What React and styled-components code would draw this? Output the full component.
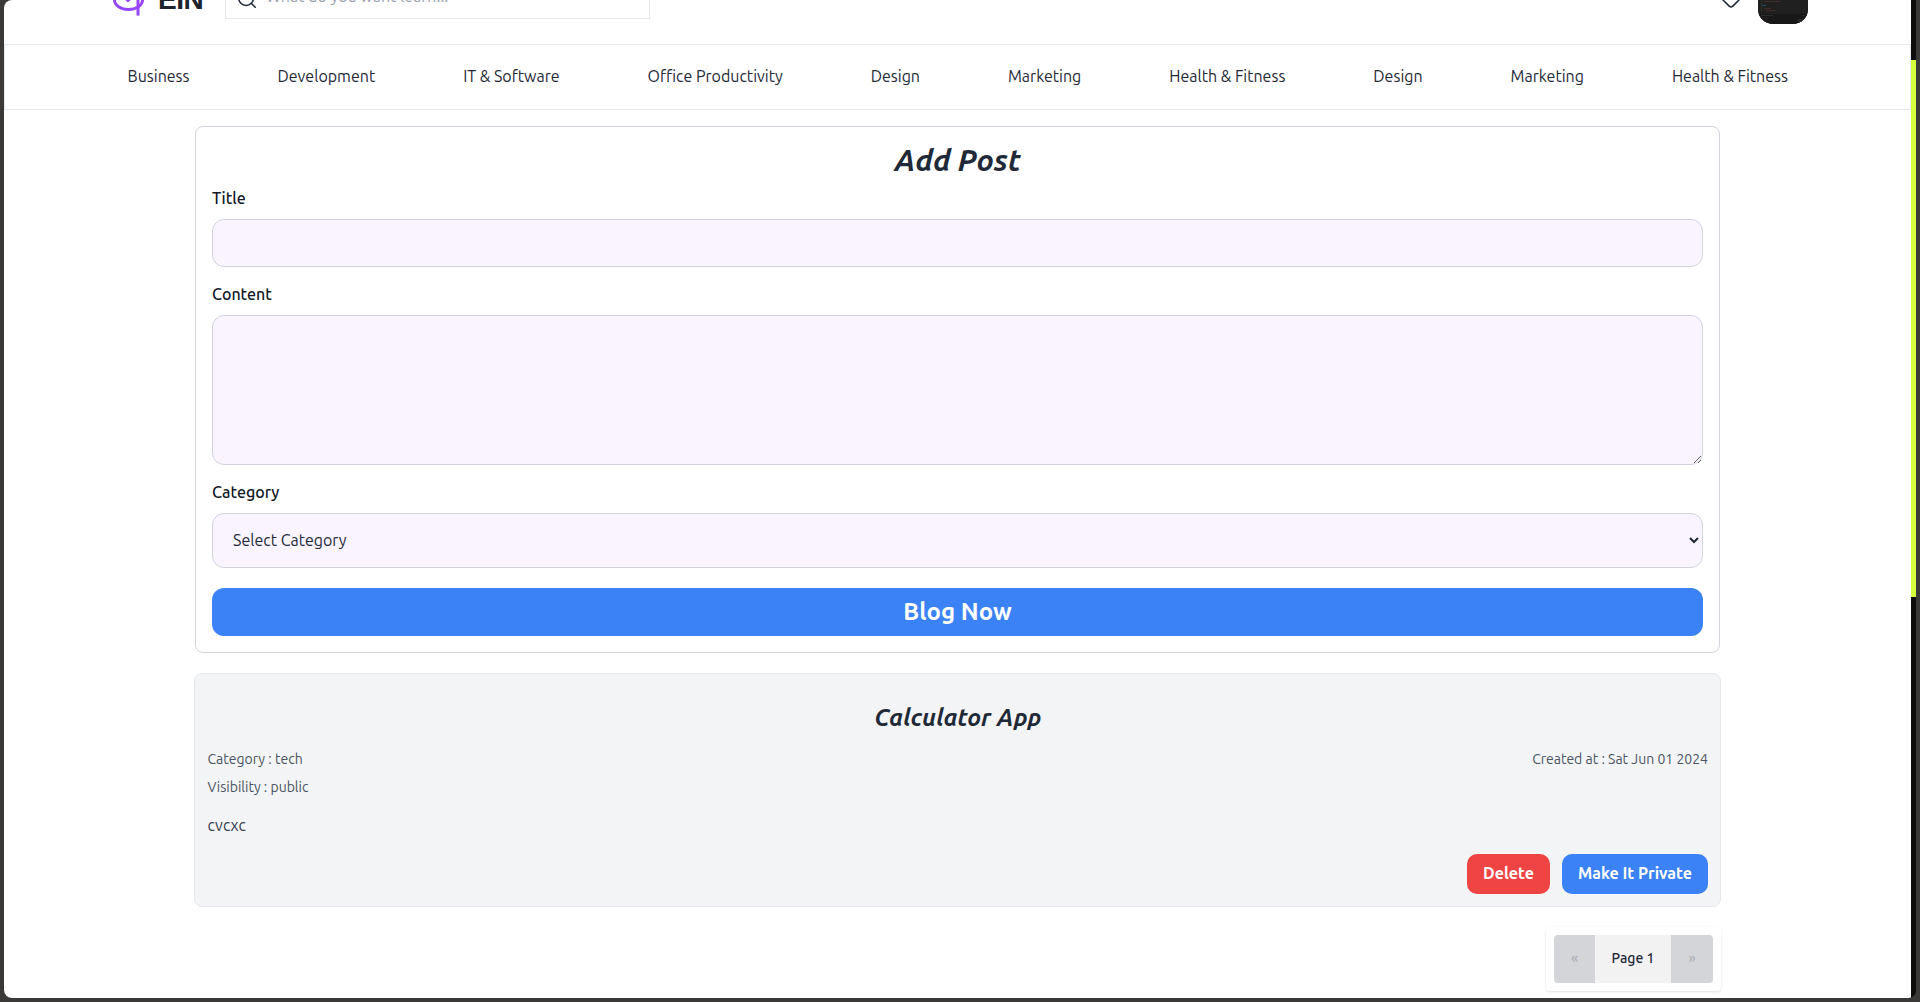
import React from "react";
import styled, { createGlobalStyle } from "styled-components";
import { Heart, Search } from "lucide-react";

const GlobalStyle = createGlobalStyle`
  *, *::before, *::after { box-sizing: border-box; }
  html, body { margin: 0; height: 100%; overflow: hidden; background: #3a3938; }
  body, input, textarea, select, button {
    font-family: Ubuntu, "Noto Sans", "Open Sans", sans-serif;
  }
  h1, h2, p { margin: 0; }
`;

const Desktop = styled.div`
  height: 1002px;
  padding: 0 4px 4px;
  background: #3a3938;
`;

const Browser = styled.div`
  display: flex;
  height: 998px;
  border-radius: 8px 0 8px 8px;
  overflow: hidden;
  background: #0d0d0d;
`;

const Page = styled.div`
  flex: 1;
  min-width: 0;
  background: #fff;
  color: #1f2937;
  font-size: 16px;
  line-height: 24px;
`;

const Scrollbar = styled.div`
  width: 5px;
  padding-top: 60px;
  background: #0d0d0d;
`;

const Thumb = styled.div`
  height: 537px;
  background: #d4ff3f;
`;

const Header = styled.header`
  display: flex;
  align-items: flex-end;
  height: 44px;
  padding: 0 103px 0 108px;
  overflow: hidden;
`;

const Brand = styled.div`
  display: flex;
  align-items: flex-end;
  width: 113px;
  height: 44px;
  padding-bottom: 28px;
  gap: 13px;
`;

const BrandMark = styled.svg`
  flex: none;
  width: 33px;
  height: 34px;
`;

const BrandName = styled.span`
  margin-bottom: 2px;
  font: 700 28px/28px "Liberation Sans", Arial, sans-serif;
  letter-spacing: -0.5px;
  color: #1d232c;
`;

const SearchBox = styled.label`
  display: flex;
  align-items: center;
  gap: 8px;
  width: 425px;
  height: 46px;
  margin-bottom: 25px;
  padding: 0 10px;
  border: 1px solid #e5e7eb;
  color: #1f2937;

  svg { flex: none; margin-top: 5px; }
`;

const SearchInput = styled.input`
  flex: 1;
  min-width: 0;
  height: 24px;
  padding: 0;
  border: 0;
  outline: 0;
  background: transparent;
  font-size: 16px;
  line-height: 24px;

  &::placeholder { color: #9ca3af; opacity: 1; }
`;

const UserTools = styled.div`
  display: flex;
  align-items: flex-end;
  gap: 15px;
  margin-left: auto;

  > svg { margin-bottom: 34px; }
`;

const Avatar = styled.div`
  display: flex;
  flex-direction: column;
  justify-content: flex-end;
  width: 50px;
  height: 50px;
  margin-bottom: 20px;
  border-radius: 15px;
  overflow: hidden;
  background: #202020;
`;

const AvatarScreen = styled.svg`
  display: block;
  width: 50px;
  height: 50px;
`;

const Nav = styled.nav`
  display: flex;
  align-items: center;
  justify-content: space-between;
  height: 66px;
  padding: 0 122px 2px 122.5px;
  border: 1px solid #e5e7eb;
`;

const NavItem = styled.span`
  white-space: nowrap;
`;

const Main = styled.main`
  width: 1527px;
  margin: 16px auto 0;
`;

const PostForm = styled.form`
  display: flex;
  flex-direction: column;
  height: 527px;
  margin: 0 1px;
  padding: 15px 16px 16px;
  border: 1px solid #d1d5db;
  border-radius: 8px;
`;

const Heading = styled.h1`
  margin-bottom: 8px;
  font-size: ${(p) => p.$size}px;
  font-style: italic;
  font-weight: 600;
  line-height: ${(p) => p.$line}px;
  text-align: center;
`;

const Field = styled.label`
  display: flex;
  flex-direction: column;
  gap: 9px;
  margin-bottom: ${(p) => p.$gap || 15}px;
`;

const FieldName = styled.span`
  color: #111827;
  font-weight: 500;
`;

const TextInput = styled.input`
  width: 100%;
  height: 48px;
  padding: 8px 16px;
  border: 1px solid #d0d3df;
  border-radius: 12px;
  background: #f9f4ff;
`;

const TextArea = styled.textarea`
  display: block;
  width: 100%;
  height: 150px;
  padding: 8px 16px;
  border: 1px solid #d0d3df;
  border-radius: 12px;
  background: #f9f4ff;
  resize: vertical;
`;

const Select = styled.select`
  width: 100%;
  height: 55px;
  padding: 0 16px 2px;
  border: 1px solid #d0d3df;
  border-radius: 12px;
  background: #f9f4ff;
  color: #1f2937;
  font-size: 16px;
`;

const SubmitButton = styled.button`
  height: 48px;
  padding: 0;
  border: 0;
  border-radius: 12px;
  background: #3b82f6;
  color: #fff;
  font-size: 24px;
  font-weight: 600;
  line-height: 32px;
`;

const PostCard = styled.article`
  display: flex;
  flex-direction: column;
  height: 234px;
  margin-top: 20px;
  padding: 28px 12px 12px 12.5px;
  border: 1px solid #e5e7eb;
  border-radius: 8px;
  background: #f3f4f6;

  > h2 { margin-bottom: 7px; }
`;

const Meta = styled.div`
  display: flex;
  justify-content: space-between;
  margin-top: 8px;
  color: #4b5563;
  font-size: 14px;
  line-height: 20px;
`;

const PostBody = styled.p`
  margin-top: 16px;
  color: #374151;
`;

const Actions = styled.div`
  display: flex;
  justify-content: flex-end;
  gap: 12px;
  margin-top: auto;
`;

const ActionButton = styled.button`
  width: ${(p) => p.$width}px;
  height: 40px;
  padding: 0 0 2px;
  border: 0;
  border-radius: 10px;
  background: ${(p) => (p.$danger ? "#ef4444" : "#3b82f6")};
  color: #fff;
  font-size: 16px;
  font-weight: 600;
  white-space: nowrap;
`;

const Pager = styled.div`
  display: flex;
  width: 175px;
  height: 64px;
  margin: 20px 0 0 auto;
  padding: 8px;
  border-radius: 4px;
  background: #fff;
  box-shadow: 0 1px 3px rgba(0, 0, 0, 0.1), 0 1px 2px -1px rgba(0, 0, 0, 0.1);
`;

const PagerButton = styled.button`
  flex: 0 0 ${(p) => p.$width}px;
  padding: 0 0 3px;
  border: 0;
  border-radius: ${(p) => p.$corners || "0"};
  background: ${(p) => (p.$current ? "#f2f2f2" : "#d4d5d9")};
  color: ${(p) => (p.$current ? "#1f2937" : "#aeb0b5")};
  font-size: 14px;
  font-weight: 500;
`;

const CATEGORIES = [
  "Business",
  "Development",
  "IT & Software",
  "Office Productivity",
  "Design",
  "Marketing",
  "Health & Fitness",
  "Design",
  "Marketing",
  "Health & Fitness",
];

function Logo() {
  return (
    <BrandMark viewBox="0 -18 33 34" fill="none" stroke="#9747ff" strokeWidth="3">
      <ellipse cx="16.5" cy="0" rx="14" ry="9.5" />
      <path d="M26 -12V15.6" />
      <path d="M8 -5L16 2.5L24 -5Z" fill="#9747ff" stroke="none" />
    </BrandMark>
  );
}

function AvatarImage() {
  return (
    <AvatarScreen viewBox="0 0 50 50">
      <rect width="50" height="50" fill="#202020" />
      <rect y="40" width="50" height="10" fill="#181818" />
      <rect x="3" width="1" height="38" fill="#293126" />
      <path d="M6 27.5H22M6 34.5H13M8 36.5H18" stroke="#402c28" />
      <path d="M4 31.5H8" stroke="#274763" />
      <path d="M3 41.5H15M44 41.5H47" stroke="#2c2c2c" />
      <path d="M40 46.5H47" stroke="#2c2b28" strokeWidth="3" />
      <path d="M3 44.5H10" stroke="#2a1c28" />
    </AvatarScreen>
  );
}

export default function App() {
  return (
    <Desktop>
      <GlobalStyle />
      <Browser>
        <Page>
          <Header>
            <Brand>
              <Logo />
              <BrandName>EIN</BrandName>
            </Brand>
            <SearchBox>
              <Search size={22} strokeWidth={1.7} />
              <SearchInput placeholder="What do you want learn..." />
            </SearchBox>
            <UserTools>
              <Heart size={24} strokeWidth={1.6} />
              <Avatar>
                <AvatarImage />
              </Avatar>
            </UserTools>
          </Header>
          <Nav>
            {CATEGORIES.map((label, i) => (
              <NavItem key={i}>{label}</NavItem>
            ))}
          </Nav>
          <Main>
            <PostForm>
              <Heading $size={30} $line={36}>Add Post</Heading>
              <Field>
                <FieldName>Title</FieldName>
                <TextInput />
              </Field>
              <Field>
                <FieldName>Content</FieldName>
                <TextArea />
              </Field>
              <Field $gap={20}>
                <FieldName>Category</FieldName>
                <Select defaultValue="">
                  <option value="">Select Category</option>
                </Select>
              </Field>
              <SubmitButton type="button">Blog Now</SubmitButton>
            </PostForm>
            <PostCard>
              <Heading as="h2" $size={24} $line={32}>Calculator App</Heading>
              <Meta>
                <span>Category : tech</span>
                <span>Created at : Sat Jun 01 2024</span>
              </Meta>
              <Meta>
                <span>Visibility : public</span>
              </Meta>
              <PostBody>cvcxc</PostBody>
              <Actions>
                <ActionButton $danger $width={83}>Delete</ActionButton>
                <ActionButton $width={146}>Make It Private</ActionButton>
              </Actions>
            </PostCard>
            <Pager>
              <PagerButton $width={41} $corners="4px 0 0 4px" disabled>«</PagerButton>
              <PagerButton $width={76} $current>Page 1</PagerButton>
              <PagerButton $width={42} $corners="0 4px 4px 0" disabled>»</PagerButton>
            </Pager>
          </Main>
        </Page>
        <Scrollbar>
          <Thumb />
        </Scrollbar>
      </Browser>
    </Desktop>
  );
}
